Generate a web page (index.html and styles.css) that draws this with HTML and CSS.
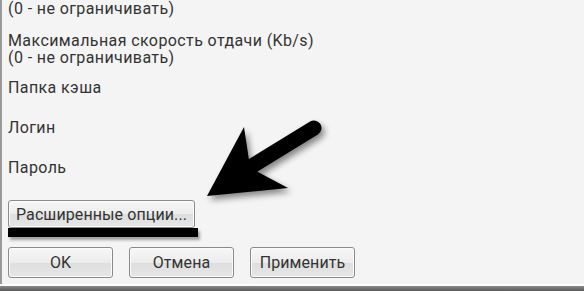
FILE: index.html
```html
<!DOCTYPE html>
<html lang="ru">
<head>
<meta charset="utf-8">
<link rel="stylesheet" href="styles.css">
</head>
<body>
<div class="window">
  <div class="form">
    <div class="field f1"><div>(0 - не ограничивать)</div></div>
    <div class="field f2"><div>Максимальная скорость отдачи (Kb/s)</div><div>(0 - не ограничивать)</div></div>
    <div class="field f3"><div>Папка кэша</div></div>
    <div class="field f4"><div>Логин</div></div>
    <div class="field f5"><div>Пароль</div></div>
    <button class="btn adv">Расширенные опции...</button>
    <div class="mark"></div>
    <div class="actions">
      <button class="btn act">OK</button>
      <button class="btn act">Отмена</button>
      <button class="btn act">Применить</button>
    </div>
  </div>
  <svg class="arrow" width="584" height="291" viewBox="0 0 584 291">
    <line x1="252" y1="166" x2="314" y2="128" stroke="#000" stroke-width="15" stroke-linecap="round"/>
    <polygon points="207,196 244,127 249,160 258,172 288,188" fill="#000"/>
  </svg>
</div>
<div class="footer"></div>
</body>
</html>
```
FILE: styles.css
```css
html, body {
  margin: 0;
  padding: 0;
}
body {
  width: 584px;
  height: 291px;
  overflow: hidden;
  background: #f4f4f4;
  font-family: Roboto, "Noto Sans", sans-serif;
  font-size: 16px;
  letter-spacing: 0.4px;
  color: #333;
}
.window {
  position: relative;
  height: 284px;
  border-left: 2px solid #9a9a9a;
  box-sizing: border-box;
  padding-left: 6px;
}
.form {
  display: flex;
  flex-direction: column;
  align-items: flex-start;
}
.field {
  line-height: 17px;
}
.f2 { margin-top: 15px; }
.f3 { margin-top: 13px; }
.f4 { margin-top: 23px; }
.f5 { margin-top: 23px; }
.btn {
  font-family: Roboto, "Noto Sans", sans-serif;
  font-size: 16px;
  letter-spacing: 0.1px;
  color: #333;
  border: 1px solid #8a8a8a;
  border-radius: 3px;
  background: linear-gradient(#f7f7f7 0%, #ececec 50%, #dedede 51%, #e6e6e6 100%);
  box-shadow: inset 0 0 0 1px #fbfbfb;
  padding: 0;
  box-sizing: border-box;
}
.adv {
  margin-top: 24px;
  width: 187px;
  height: 28px;
}
.mark {
  width: 190px;
  height: 9px;
  background: #000;
  box-shadow: 2px 3px 3px rgba(0,0,0,0.35);
}
.actions {
  display: flex;
  gap: 16px;
  margin-top: 10px;
}
.act {
  width: 105px;
  height: 31px;
}
.arrow {
  position: absolute;
  left: -2px;
  top: 0;
  filter: drop-shadow(3px 4px 3px rgba(0,0,0,0.45));
}
.footer {
  height: 7px;
  border-top: 2px solid #fdfdfd;
  box-sizing: border-box;
  background: linear-gradient(#8a8a8a, #5a5a5a);
}
```
